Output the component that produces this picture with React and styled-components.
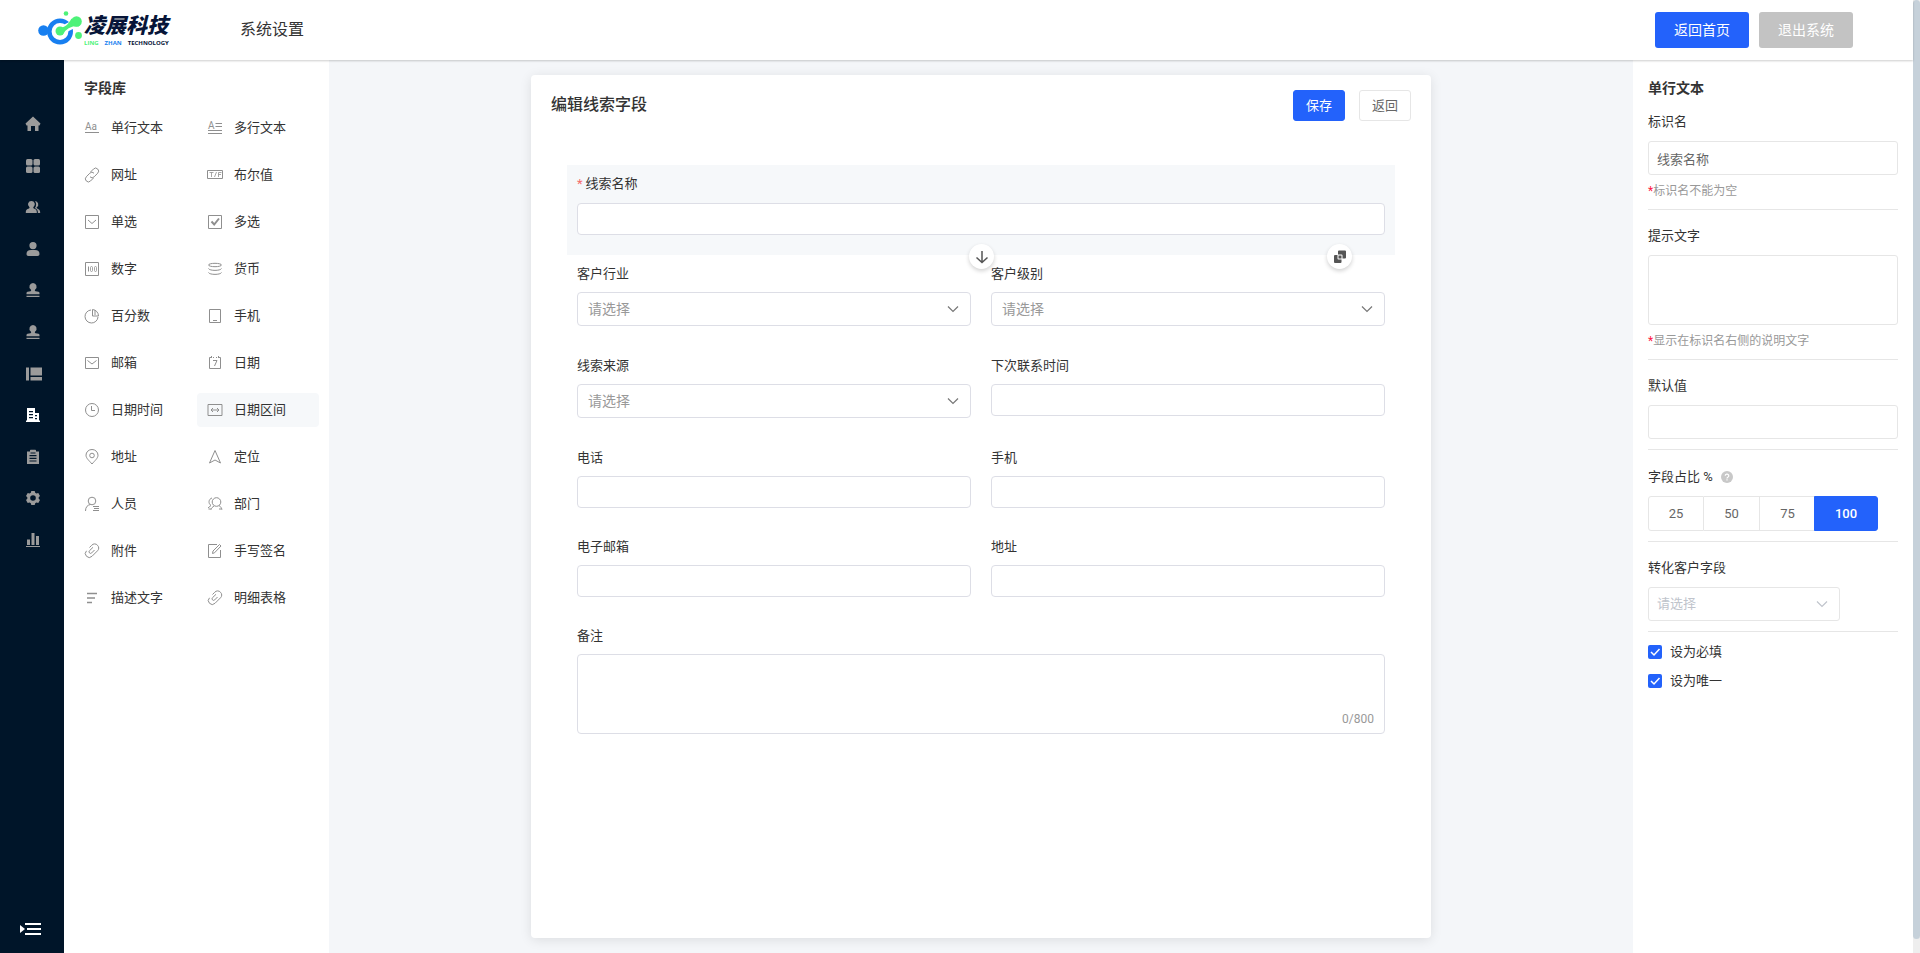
import React from "react";
import styled, { createGlobalStyle } from "styled-components";

const C = {
  blue: "#2362fb",
  navy: "#001529",
  text: "#333333",
  sub: "#666666",
  muted: "#999999",
  line: "#e6e6e6",
  field: "#dddee6",
  soft: "#f6f8fa",
  canvas: "#f4f6f9",
};

const Global = createGlobalStyle`
  *, *::before, *::after { box-sizing: border-box; }
  html, body, #root { height: 100%; }
  body {
    margin: 0;
    color: ${C.text};
    font-family: Roboto, "Noto Sans CJK SC", sans-serif;
    font-size: 13px;
    line-height: 20px;
  }
  button, input, select, textarea { font: inherit; color: inherit; margin: 0; }
  button { cursor: pointer; }
  svg { display: block; }
`;

const Shell = styled.div`
  display: flex;
  height: 100%;
  min-height: 760px;
  background: #fff;
`;

const Page = styled.div`
  flex: 1;
  min-width: 0;
  display: flex;
  flex-direction: column;
`;

const ScrollTrack = styled.div`
  width: 7px;
  background: #eeeeee;
  display: flex;
`;

const ScrollThumb = styled.div`
  flex: 1;
  margin-bottom: 14px;
  border-radius: 4px;
  background: #c6d1da;
`;

const Header = styled.header`
  position: relative;
  z-index: 1;
  height: 60px;
  display: flex;
  align-items: center;
  padding: 0 60px 0 38px;
  background: #fff;
  box-shadow: 0 1px 2px rgba(0, 0, 0, 0.2);
`;

const Brand = styled.a`
  display: flex;
  align-items: center;
  gap: 1px;
  width: 202px;
  text-decoration: none;
`;

const BrandName = styled.span`
  display: block;
  font-size: 21px;
  line-height: 26px;
  font-weight: 900;
  font-style: italic;
  color: #071538;
`;

const BrandSub = styled.span`
  display: flex;
  gap: 6px;
  font-family: "Open Sans", sans-serif;
  font-size: 6px;
  line-height: 8px;
  font-weight: 700;
  color: #071538;
`;

const Tint = styled.span`
  color: ${(p) => p.$color};
`;

const Section = styled.h1`
  margin: 0;
  flex: 1;
  font-size: 16px;
  line-height: 24px;
  font-weight: 400;
`;

const HeaderActions = styled.div`
  display: flex;
  gap: 10px;
`;

const HeaderButton = styled.button`
  width: 94px;
  height: 36px;
  padding: 0;
  border: 0;
  border-radius: 3px;
  font-size: 14px;
  color: #fff;
  background: ${(p) => (p.$primary ? C.blue : "#c3c3c3")};
`;

const Body = styled.div`
  flex: 1;
  min-height: 0;
  display: flex;
`;

const Sidebar = styled.aside`
  width: 64px;
  display: flex;
  flex-direction: column;
  justify-content: space-between;
  padding: 56px 0 14px;
  background: ${C.navy};
`;

const Nav = styled.nav`
  height: 432px;
  display: flex;
  flex-direction: column;
  justify-content: space-between;
`;

const NavLink = styled.a`
  display: block;
  width: 16px;
  height: 16px;
  margin-left: 25px;
  color: ${(p) => (p.$active ? "#ffffff" : "#9b9b9b")};
`;

const Toggle = styled.button`
  align-self: flex-start;
  margin-left: 20px;
  padding: 0;
  border: 0;
  background: none;
  color: #fff;
`;

const Palette = styled.section`
  width: 265px;
  padding: 18px 10px 20px;
  background: #fff;
`;

const PanelTitle = styled.h2`
  margin: 0;
  padding: 0 0 ${(p) => (p.$indent ? 13 : 14)}px ${(p) => p.$indent || 0}px;
  font-size: 14px;
  line-height: 20px;
  font-weight: 600;
`;

const PaletteGrid = styled.div`
  display: grid;
  grid-template-columns: 1fr 1fr;
  gap: 13px 1px;
`;

const PaletteItem = styled.button`
  height: 34px;
  display: flex;
  align-items: center;
  gap: 11px;
  padding: 0 10px;
  border: 0;
  border-radius: 4px;
  text-align: left;
  color: ${C.text};
  background: ${(p) => (p.$active ? C.soft : "none")};

  svg { color: #8f8f8f; flex: none; }
`;

const Canvas = styled.main`
  flex: 1;
  min-width: 0;
  display: flex;
  justify-content: center;
  padding: 15px;
  background: ${C.canvas};
`;

const Card = styled.section`
  width: 900px;
  padding: 15px 20px;
  border-radius: 4px;
  background: #fff;
  box-shadow: 0 2px 12px rgba(0, 0, 0, 0.1);
`;

const CardHead = styled.div`
  display: flex;
  align-items: flex-start;
  height: 31px;
  margin-bottom: 44px;
`;

const CardTitle = styled.h2`
  flex: 1;
  margin: 0;
  font-size: 16px;
  line-height: 29px;
  font-weight: 500;
`;

const CardActions = styled.div`
  display: flex;
  gap: 14px;
`;

const SmallButton = styled.button`
  width: 52px;
  height: 31px;
  padding: 0;
  border: 1px solid ${(p) => (p.$primary ? C.blue : C.line)};
  border-radius: 3px;
  color: ${(p) => (p.$primary ? "#fff" : C.sub)};
  background: ${(p) => (p.$primary ? C.blue : "#fff")};
`;

const Form = styled.form`
  display: grid;
  grid-template-columns: 1fr 1fr;
  padding: 0 16px;
`;

const Field = styled.div`
  position: relative;
  grid-column: ${(p) => (p.$wide ? "1 / -1" : "auto")};
  padding: 9px 10px 20px;
  background: ${(p) => (p.$active ? C.soft : "none")};
`;

const FieldLabel = styled.label`
  display: block;
  margin-bottom: ${(p) => (p.$active ? 9 : 8)}px;
`;

const Required = styled.span`
  margin-right: 3px;
  color: #f56c6c;
`;

const TextInput = styled.input`
  display: block;
  width: 100%;
  height: 32px;
  padding: 0 10px;
  border: 1px solid ${C.field};
  border-radius: 4px;
  outline: none;
  background: #fff;
`;

const SelectBox = styled.div`
  position: relative;
  margin-bottom: 1px;

  svg {
    position: absolute;
    top: 11px;
    right: 12px;
    color: #777;
    pointer-events: none;
  }
`;

const Select = styled.select`
  appearance: none;
  display: block;
  width: 100%;
  height: 34px;
  padding: 0 30px 0 10px;
  border: 1px solid ${C.field};
  border-radius: 4px;
  font-size: 14px;
  color: ${C.muted};
  background: #fff;
`;

const AreaBox = styled.div`
  position: relative;
`;

const Area = styled.textarea`
  display: block;
  width: 100%;
  height: 80px;
  padding: 6px 10px;
  border: 1px solid ${C.field};
  border-radius: 4px;
  resize: none;
  background: #fff;
`;

const Counter = styled.span`
  position: absolute;
  right: 11px;
  bottom: 5px;
  font-size: 12px;
  color: ${C.muted};
`;

const RoundButton = styled.button`
  position: absolute;
  z-index: 1;
  bottom: -14px;
  ${(p) => (p.$center ? "left: calc(50% - 12px);" : "right: 43px;")}
  width: 25px;
  height: 25px;
  display: flex;
  align-items: center;
  justify-content: center;
  padding: 0;
  border: 0;
  border-radius: 50%;
  color: #555;
  background: #fff;
  box-shadow: 0 2px 4px rgba(0, 0, 0, 0.18);
`;

const Settings = styled.aside`
  width: 280px;
  padding: 18px 15px;
  background: #fff;
`;

const Group = styled.div`
  padding: ${(p) => (p.$first ? 0 : 16)}px 0 10px;
  border-bottom: 1px solid ${C.line};
`;

const GroupLabel = styled.label`
  display: flex;
  align-items: center;
  margin-bottom: 9px;
`;

const Help = styled.span`
  height: 21px;
  display: flex;
  align-items: center;
  margin-left: 8px;
`;

const SettingInput = styled(TextInput)`
  height: 34px;
  padding: 0 8px;
  border-color: ${C.line};
  border-radius: 3px;
  color: ${C.sub};
`;

const SettingArea = styled(Area)`
  height: 70px;
  border-color: ${C.line};
  border-radius: 3px;
`;

const Hint = styled.p`
  margin: 8px 0 0;
  font-size: 12px;
  line-height: 16px;
  color: ${C.muted};
`;

const Star = styled.span`
  color: #ff1744;
`;

const Segments = styled.div`
  display: flex;
`;

const Segment = styled.label`
  position: relative;
  width: ${(p) => (p.$active ? 64 : 56)}px;
  height: 35px;
  margin-left: ${(p) => (p.$active ? -2 : 0)}px;
  display: flex;
  align-items: center;
  justify-content: center;
  border: 1px solid ${(p) => (p.$active ? C.blue : C.line)};
  border-left-width: ${(p) => (p.$first || p.$active ? 1 : 0)}px;
  border-radius: ${(p) => (p.$first ? "3px 0 0 3px" : p.$active ? "0 3px 3px 0" : "0")};
  font-weight: ${(p) => (p.$active ? 500 : 400)};
  color: ${(p) => (p.$active ? "#fff" : C.sub)};
  background: ${(p) => (p.$active ? C.blue : "#fff")};

  input {
    position: absolute;
    inset: 0;
    margin: 0;
    opacity: 0;
  }
`;

const NarrowSelectBox = styled(SelectBox)`
  width: 192px;
  margin-bottom: 0;

  svg { color: #c0c4cc; }
`;

const NarrowSelect = styled(Select)`
  padding-left: 8px;
  border-color: ${C.line};
  border-radius: 3px;
  font-size: 13px;
  color: #c0c4cc;
`;

const Checks = styled.div`
  display: flex;
  flex-direction: column;
  gap: 9px;
  padding-top: 10px;
`;

const CheckRow = styled.label`
  display: flex;
  align-items: center;
  gap: 8px;
`;

const CheckBox = styled.span`
  position: relative;
  width: 14px;
  height: 14px;

  input {
    appearance: none;
    display: block;
    width: 14px;
    height: 14px;
    border-radius: 2px;
    background: ${C.blue};
  }

  svg {
    position: absolute;
    inset: 0;
    pointer-events: none;
  }
`;

const Chevron = () => (
  <svg width="12" height="12" viewBox="0 0 12 12" fill="none" stroke="currentColor" strokeWidth="1.2">
    <path d="M1 3.500 6 8.500 11 3.500" />
  </svg>
);

const LogoMark = () => (
  <svg width="45" height="36" viewBox="0 0 45 36" overflow="visible">
    <circle cx="22" cy="19.500" r="10.700" fill="none" stroke="#177ff0" strokeWidth="4.600" />
    <path d="M25 17.500 38 11" stroke="#fff" strokeWidth="8" />
    <circle cx="5.500" cy="18.500" r="5.300" fill="#177ff0" />
    <circle cx="22" cy="19" r="4.500" fill="#4df279" />
    <path d="M20 15.500C26 16.500 30 13 33.500 6.500L41 14.500C34 13.500 29 16 24.500 22.500Z" fill="#4df279" />
    <circle cx="38.500" cy="9.500" r="5.300" fill="#4df279" />
    <circle cx="28" cy="1.500" r="2.300" fill="#4df279" />
    <circle cx="40.500" cy="23.500" r="3.400" fill="#4df279" />
  </svg>
);

const stamp = (
  <path d="M8 1a3.700 3.700 0 0 1 2.200 6.600c-.5.4-.6 1.400.3 1.600l3 .5c.7.200 1 .6 1 1.200v1.300h-13v-1.300c0-.6.3-1 1-1.200l3-.5c.9-.2.8-1.200.3-1.600A3.700 3.700 0 0 1 8 1ZM1.500 13.700h13V15h-13Z" />
);

const NAV = [
  { name: "首页", art: <path d="M8 .5 15.500 7.500 14.500 9.500H13.500V15H10V10H6V15H2.500V9.500H1.500L.5 7.500Z" /> },
  {
    name: "应用",
    art: (
      <>
        <rect x="1" y="1" width="6.500" height="6.500" rx="1.500" />
        <rect x="8.500" y="1" width="6.500" height="6.500" rx="1.500" />
        <rect x="1" y="8.500" width="6.500" height="6.500" rx="1.500" />
        <rect x="8.500" y="8.500" width="6.500" height="6.500" rx="1.500" />
      </>
    ),
  },
  {
    name: "团队",
    art: (
      <>
        <path d="M6.500 2a3.400 3.400 0 0 1 2 6.100c-.4.4-.3 1 .3 1.300 2 .8 3 1.600 3 3.600v1H.8v-1c0-2 1-2.800 3.200-3.600.6-.3.700-.9.300-1.300A3.400 3.400 0 0 1 6.500 2Z" />
        <path d="M10 2a3.400 3.400 0 0 1 1.800 6.200c-.3.400-.2.900.4 1.200 2 .8 3 1.600 3 4.600h-2.300c0-2.500-.6-3.800-3-4.900 1.600-2 1.700-5.200.1-7.100Z" />
      </>
    ),
  },
  {
    name: "客户",
    art: <path d="M8 1a3.600 3.600 0 1 1 0 7.200A3.600 3.600 0 0 1 8 1Zm-2 8h4c3 0 4.500 1.500 4.500 4 0 1.300-.7 2-2 2h-9c-1.300 0-2-.7-2-2 0-2.500 1.500-4 4.500-4Z" />,
  },
  { name: "审批", art: stamp },
  { name: "业务审批", art: stamp },
  { name: "工作台", art: <path d="M1 1.500h3v13H1ZM5.500 1.500h11.500v8H5.500ZM5.500 11h11.500v3.500H5.500Z" /> },
  {
    name: "自定义",
    active: true,
    art: <path fillRule="evenodd" d="M2 1h8v5h4v7.500h1V15H1v-1.500h1ZM4 4v1.200h4V4Zm0 3v1.200h4V7Zm0 3v1.200h4V10Zm6-2v1.200h2V8Zm0 3v1.200h2V11Z" />,
  },
  {
    name: "任务",
    art: <path fillRule="evenodd" d="M2 2.500h3V1.500a.7.700 0 0 1 .7-.7h4.600a.7.700 0 0 1 .7.700v1h3V15H2ZM4.500 6v1.200h7V6Zm0 2.700v1.200h7V8.700Zm0 2.700v1.200h7v-1.200ZM5.500 3.500v1h5v-1Z" />,
  },
  {
    name: "设置",
    art: (
      <path
        fillRule="evenodd"
        d="M6.300 1h3.400l.5 1.800 1.200.7 1.900-.5L15 6l-1.300 1.300v1.400L15 10l-1.700 3-1.900-.5-1.200.7L9.700 15H6.300l-.5-1.800-1.200-.7-1.900.5L1 10l1.300-1.300V7.300L1 6l1.700-3 1.900.5 1.200-.7ZM8 5.200a2.800 2.800 0 1 0 0 5.600 2.800 2.800 0 0 0 0-5.600Z"
      />
    ),
  },
  { name: "统计", art: <path d="M2 7.500h3V13H2ZM6.500 1h3v12h-3ZM11 4h3v9h-3ZM1 14h14v1H1Z" /> },
];

const clip = (
  <path d="M5.500 4.500 7.700 2.300a3.700 3.700 0 0 1 5.800 0 3.700 3.700 0 0 1 0 5.500L8 13.300a3.900 3.900 0 0 1-5.500 0 3.900 3.900 0 0 1 0-5.500M10.500 7 7.700 9.900a1.500 1.500 0 0 1-2.200-2.200L9 4.300" />
);

const iconText = { fontFamily: "Roboto", fill: "currentColor", stroke: "none" };

const FIELDS = [
  {
    name: "单行文本",
    art: (
      <>
        <text x="1" y="10" fontSize="10" {...iconText}>Aa</text>
        <path d="M1 12.500h14" />
      </>
    ),
  },
  {
    name: "多行文本",
    art: (
      <>
        <text x="1" y="9" fontSize="10" {...iconText}>A</text>
        <path d="M8.500 3.500H15M8.500 6.500H15M1 10.500h14M1 13.500h14" />
      </>
    ),
  },
  {
    name: "网址",
    art: (
      <>
        <path d="m6.500 5 3-3a2.900 2.900 0 0 1 4.200 4.200l-3.500 3.600a2.900 2.900 0 0 1-4.200 0" />
        <path d="m9.500 11-3 3a2.900 2.900 0 0 1-4.200-4.200l3.500-3.600a2.900 2.900 0 0 1 4.200 0" />
      </>
    ),
  },
  {
    name: "布尔值",
    art: (
      <>
        <path d="M.5 3.500h15v8H.5Z" />
        <path d="M2.500 5.500h4M4.500 5.500V10M9.500 5 7.500 10M11.500 10V5.500h3M11.500 7.500h2.500" strokeWidth="0.8" />
      </>
    ),
  },
  { name: "单选", art: <path d="M1.500 1.500h13v13h-13ZM4 6l4 3.500L12 6" /> },
  {
    name: "多选",
    art: (
      <>
        <path d="M1.500 1.500h13v13h-13Z" />
        <path d="m4.500 7.500 2.700 3L12 4.500" strokeWidth="2" />
      </>
    ),
  },
  {
    name: "数字",
    art: (
      <>
        <path d="M1.500 1.500h13v13h-13ZM4.500 5.500v5" />
        <rect x="6.500" y="5.500" width="2" height="5" rx="1" strokeWidth="0.8" />
        <rect x="10.500" y="5.500" width="2" height="5" rx="1" strokeWidth="0.8" />
      </>
    ),
  },
  {
    name: "货币",
    art: (
      <>
        <ellipse cx="8" cy="4" rx="6.500" ry="1.700" />
        <path d="M1.500 7.500c1 2.500 12 2.500 13 0M1.500 11.500c1 2.500 12 2.500 13 0" />
      </>
    ),
  },
  { name: "百分数", art: <path d="M7 2A6.500 6.500 0 1 0 14 9M8.500 1.500V8h6A6.500 6.500 0 0 0 8.500 1.500ZM11 2v5" /> },
  { name: "手机", art: <path d="M2.500 1.500h11v13h-11ZM6 12.500h4" /> },
  { name: "邮箱", art: <path d="M1.500 2.500h13v11h-13ZM3.500 5.500 8 9l4.500-3.500" /> },
  { name: "日期", art: <path d="M4 2.500H2.500v11h11v-11H12M6 2.500h1M9 2.500h1M4.500 1v2M11.500 1v2M6 5.500h4L7.500 11" /> },
  {
    name: "日期时间",
    art: (
      <>
        <circle cx="8" cy="8" r="6.500" />
        <path d="M7.500 4v4.500H11" />
      </>
    ),
  },
  { name: "日期区间", active: true, art: <path d="M1 2.500h14v11H1ZM4 8h8M6 6 4 8l2 2M10 6l2 2-2 2" /> },
  {
    name: "地址",
    art: (
      <>
        <path d="M8 15c3-3.500 6-5.800 6-8.800a6 5.700 0 0 0-12 0C2 9.200 5 11.500 8 15Z" />
        <circle cx="8" cy="6.500" r="2.300" />
      </>
    ),
  },
  { name: "定位", art: <path d="M8 1.500 13.500 14 8 11 2.500 14Z" /> },
  {
    name: "人员",
    art: (
      <>
        <circle cx="8" cy="5" r="3.800" />
        <path d="M1.500 15c0-4 2-6 5-6.500M9 10.500h6M10 12.500h5M9 14.500h6" />
      </>
    ),
  },
  {
    name: "部门",
    art: (
      <>
        <circle cx="9.500" cy="6" r="4.300" />
        <path d="M5 2C1.500 3 1 7.500 4 9.500L1 12M7 10C5.500 11 4.500 12 4 13.500M12 9.500c1.500 1 2.500 2.300 3 4M1.500 13h3M12 13h3" />
      </>
    ),
  },
  { name: "附件", art: clip },
  { name: "手写签名", art: <path d="M10 1.500H1.500v13h12V7M5.500 10.500 6 8l6.500-6.500L14 3 7.500 9.800Z" /> },
  { name: "描述文字", art: <path d="M3 3.500h10M3 8h8M3 12.500h5" strokeWidth="1.500" /> },
  { name: "明细表格", art: clip },
];

const FORM = [
  { id: "industry", label: "客户行业", select: true },
  { id: "level", label: "客户级别", select: true },
  { id: "source", label: "线索来源", select: true },
  { id: "next", label: "下次联系时间" },
  { id: "tel", label: "电话" },
  { id: "mobile", label: "手机" },
  { id: "email", label: "电子邮箱" },
  { id: "address", label: "地址" },
];

export default function App() {
  return (
    <Shell>
      <Global />
      <Page>
        <Header>
          <Brand href="#home">
            <LogoMark />
            <span>
              <BrandName>凌展科技</BrandName>
              <BrandSub>
                <Tint $color="#4df279">LING</Tint>
                <Tint $color="#177ff0">ZHAN</Tint>
                <span>TECHNOLOGY</span>
              </BrandSub>
            </span>
          </Brand>
          <Section>系统设置</Section>
          <HeaderActions>
            <HeaderButton type="button" $primary>返回首页</HeaderButton>
            <HeaderButton type="button">退出系统</HeaderButton>
          </HeaderActions>
        </Header>
        <Body>
          <Sidebar>
            <Nav>
              {NAV.map((n) => (
                <NavLink key={n.name} href="#nav" aria-label={n.name} $active={n.active}>
                  <svg width="16" height="16" viewBox="0 0 16 16" fill="currentColor" overflow="visible">{n.art}</svg>
                </NavLink>
              ))}
            </Nav>
            <Toggle type="button" aria-label="展开菜单">
              <svg width="21" height="20" viewBox="0 0 21 20" fill="currentColor">
                <path d="M0 6 5 10 0 14ZM5 4h16v2H5ZM7 9h14v2H7ZM5 14h16v2H5Z" />
              </svg>
            </Toggle>
          </Sidebar>
          <Palette>
            <PanelTitle $indent={10}>字段库</PanelTitle>
            <PaletteGrid>
              {FIELDS.map((f) => (
                <PaletteItem key={f.name} type="button" $active={f.active}>
                  <svg width="16" height="16" viewBox="0 0 16 16" fill="none" stroke="currentColor">{f.art}</svg>
                  {f.name}
                </PaletteItem>
              ))}
            </PaletteGrid>
          </Palette>
          <Canvas>
            <Card>
              <CardHead>
                <CardTitle>编辑线索字段</CardTitle>
                <CardActions>
                  <SmallButton type="button" $primary>保存</SmallButton>
                  <SmallButton type="button">返回</SmallButton>
                </CardActions>
              </CardHead>
              <Form>
                <Field $wide $active>
                  <FieldLabel htmlFor="lead" $active><Required>*</Required>线索名称</FieldLabel>
                  <TextInput id="lead" />
                  <RoundButton type="button" aria-label="下移" $center>
                    <svg width="14" height="14" viewBox="0 0 14 14" fill="none" stroke="currentColor" strokeWidth="1.500">
                      <path d="M7 1v11.500M1.500 7.500 7 12.500l5.500-5" />
                    </svg>
                  </RoundButton>
                  <RoundButton type="button" aria-label="复制">
                    <svg width="14" height="14" viewBox="0 0 14 14" fill="currentColor">
                      <path d="M6 0.500h6a1 1 0 0 1 1 1v6a1 1 0 0 1-1 1H9.500V5.500a1 1 0 0 0-1-1H5v-3a1 1 0 0 1 1-1Z" />
                      <path d="M2 5h2.500v3.500a1 1 0 0 0 1 1H8.500V12a1 1 0 0 1-1 1H2a1 1 0 0 1-1-1V6a1 1 0 0 1 1-1ZM5.500 5.500h3v3h-3Z" />
                    </svg>
                  </RoundButton>
                </Field>
                {FORM.map((f) => (
                  <Field key={f.id}>
                    <FieldLabel htmlFor={f.id}>{f.label}</FieldLabel>
                    {f.select ? (
                      <SelectBox>
                        <Select id={f.id}><option>请选择</option></Select>
                        <Chevron />
                      </SelectBox>
                    ) : (
                      <TextInput id={f.id} />
                    )}
                  </Field>
                ))}
                <Field $wide>
                  <FieldLabel htmlFor="remark">备注</FieldLabel>
                  <AreaBox>
                    <Area id="remark" />
                    <Counter>0/800</Counter>
                  </AreaBox>
                </Field>
              </Form>
            </Card>
          </Canvas>
          <Settings>
            <PanelTitle>单行文本</PanelTitle>
            <Group $first>
              <GroupLabel htmlFor="s-name">标识名</GroupLabel>
              <SettingInput id="s-name" defaultValue="线索名称" />
              <Hint><Star>*</Star>标识名不能为空</Hint>
            </Group>
            <Group>
              <GroupLabel htmlFor="s-tip">提示文字</GroupLabel>
              <SettingArea id="s-tip" />
              <Hint><Star>*</Star>显示在标识名右侧的说明文字</Hint>
            </Group>
            <Group>
              <GroupLabel htmlFor="s-default">默认值</GroupLabel>
              <SettingInput id="s-default" />
            </Group>
            <Group>
              <GroupLabel as="div" id="s-ratio">
                字段占比 %
                <Help>
                  <svg width="12" height="12" viewBox="0 0 12 12">
                    <circle cx="6" cy="6" r="6" fill="#c8c8c8" />
                    <path d="M4.200 4.800a1.800 1.600 0 1 1 2.600 1.400Q6 6.600 6 7.400M6 8.200v1.200" fill="none" stroke="#fff" strokeWidth="1.200" />
                  </svg>
                </Help>
              </GroupLabel>
              <Segments role="radiogroup" aria-labelledby="s-ratio">
                {[25, 50, 75, 100].map((n) => (
                  <Segment key={n} $first={n === 25} $active={n === 100}>
                    <input type="radio" name="ratio" value={n} defaultChecked={n === 100} />
                    {n}
                  </Segment>
                ))}
              </Segments>
            </Group>
            <Group>
              <GroupLabel htmlFor="s-convert">转化客户字段</GroupLabel>
              <NarrowSelectBox>
                <NarrowSelect id="s-convert"><option>请选择</option></NarrowSelect>
                <Chevron />
              </NarrowSelectBox>
            </Group>
            <Checks>
              {["设为必填", "设为唯一"].map((t) => (
                <CheckRow key={t}>
                  <CheckBox>
                    <input type="checkbox" defaultChecked />
                    <svg width="14" height="14" viewBox="0 0 14 14" fill="none" stroke="#fff" strokeWidth="1.500">
                      <path d="m3 7 3 3 5.500-6" />
                    </svg>
                  </CheckBox>
                  {t}
                </CheckRow>
              ))}
            </Checks>
          </Settings>
        </Body>
      </Page>
      <ScrollTrack><ScrollThumb /></ScrollTrack>
    </Shell>
  );
}
